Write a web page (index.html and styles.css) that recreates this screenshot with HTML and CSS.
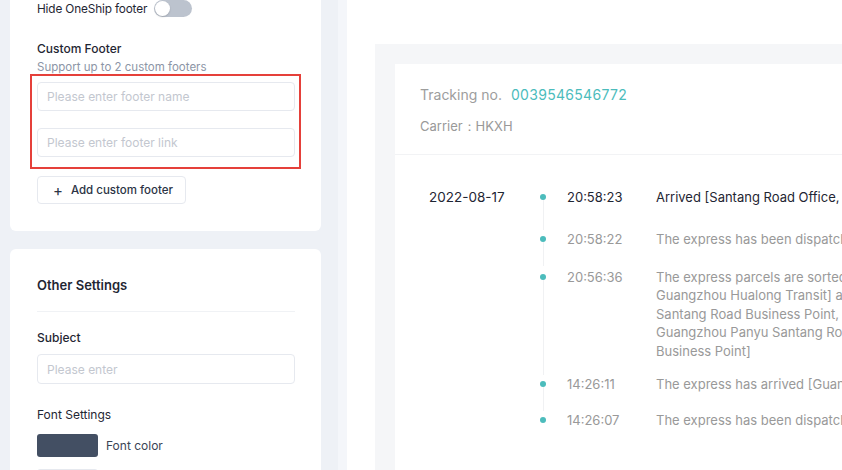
FILE: index.html
```html
<!DOCTYPE html>
<html lang="en">
<head>
    <meta charset="UTF-8">
    <meta name="viewport" content="width=device-width, initial-scale=1.0">
    <title>Tracking Page Settings</title>
    <link rel="stylesheet" href="styles.css">
</head>
<body>

    <div class="page">
        <!-- Settings column -->
        <div class="sidebar">
            <div class="card card-footer">
                <div class="switch-row">
                    <span>Hide OneShip footer</span>
                    <span class="switch"><span class="knob"></span></span>
                </div>

                <div class="field-title">Custom Footer</div>
                <div class="field-hint">Support up to 2 custom footers</div>

                <div class="highlight">
                    <input type="text" class="text-input" placeholder="Please enter footer name">
                    <input type="text" class="text-input" placeholder="Please enter footer link">
                </div>

                <button type="button" class="add-btn"><span class="plus">+</span>Add custom footer</button>
            </div>

            <div class="card card-other">
                <h3>Other Settings</h3>
                <div class="divider"></div>

                <label class="field-label" for="subject">Subject</label>
                <input type="text" class="text-input" id="subject" placeholder="Please enter">

                <div class="field-sub">Font Settings</div>
                <div class="color-row">
                    <span class="swatch swatch-dark"></span>
                    <span>Font color</span>
                </div>
                <div class="color-row">
                    <span class="swatch swatch-light"></span>
                </div>
            </div>
        </div>

        <!-- Preview -->
        <div class="preview-wrap">
            <div class="preview">
                <div class="preview-box">
                    <div class="track-card">
                        <div class="track-head">
                            <div class="track-no">Tracking no.<span class="num">0039546546772</span></div>
                            <div class="carrier">Carrier：HKXH</div>
                        </div>

                        <div class="timeline">
                            <div class="tl-item tl-first">
                                <div class="tl-date">2022-08-17</div>
                                <div class="tl-axis"><span class="dot"></span><span class="line"></span></div>
                                <div class="tl-time">20:58:23</div>
                                <div class="tl-desc">Arrived [Santang Road Office, Panyu District, Guangzhou]</div>
                            </div>
                            <div class="tl-item">
                                <div class="tl-date"></div>
                                <div class="tl-axis"><span class="dot"></span><span class="line"></span></div>
                                <div class="tl-time">20:58:22</div>
                                <div class="tl-desc">The express has been dispatched from [Guangzhou]</div>
                            </div>
                            <div class="tl-item tl-long">
                                <div class="tl-date"></div>
                                <div class="tl-axis"><span class="dot"></span><span class="line"></span></div>
                                <div class="tl-time">20:56:36</div>
                                <div class="tl-desc">The express parcels are sorted in [<br>Guangzhou Hualong Transit] and sent to [<br>Santang Road Business Point, Guangzhou<br>Guangzhou Panyu Santang Road<br>Business Point]</div>
                            </div>
                            <div class="tl-item">
                                <div class="tl-date"></div>
                                <div class="tl-axis"><span class="dot"></span><span class="line"></span></div>
                                <div class="tl-time">14:26:11</div>
                                <div class="tl-desc">The express has arrived [Guangzhou Hualong Transit]</div>
                            </div>
                            <div class="tl-item">
                                <div class="tl-date"></div>
                                <div class="tl-axis"><span class="dot"></span><span class="line"></span></div>
                                <div class="tl-time">14:26:07</div>
                                <div class="tl-desc">The express has been dispatched from [Guangzhou]</div>
                            </div>
                        </div>
                    </div>
                </div>
            </div>
        </div>
    </div>

</body>
</html>
```

FILE: styles.css
```css
body {
    margin: 0;
    font-family: Inter, "Noto Sans", sans-serif;
    background-color: #eef1f6;
    color: #1f2633;
    height: 470px;
    overflow: hidden;
}
.page {
    display: flex;
    height: 470px;
}
.sidebar {
    width: 311px;
    margin-left: 10px;
    flex-shrink: 0;
    display: flex;
    flex-direction: column;
    gap: 18px;
}
.card {
    background: white;
    border-radius: 0 0 6px 6px;
    padding: 0 26px 27px 27px;
}
.card-other {
    border-radius: 6px;
    padding-top: 26px;
    flex: 1;
}
.switch-row {
    display: flex;
    align-items: center;
    gap: 7px;
    height: 17px;
    font-size: 11.8px;
    letter-spacing: -0.15px;
}
.switch {
    width: 38px;
    height: 17px;
    border-radius: 9px;
    background: #bcc3ce;
    display: flex;
    align-items: center;
    padding-left: 1px;
    box-sizing: border-box;
}
.knob {
    width: 15px;
    height: 15px;
    border-radius: 50%;
    background: white;
    box-shadow: 0 1px 2px rgba(0, 0, 0, 0.15);
}
.field-title {
    margin-top: 23px;
    font-size: 12px;
    font-weight: 500;
    line-height: 18px;
}
.field-hint {
    margin-top: 1px;
    font-size: 11.5px;
    line-height: 16px;
    color: #8c95a6;
}
.highlight {
    margin: -1px -6px 0 -7px;
    padding: 6px 4px 10px 5px;
    border: 2px solid #e5403a;
    display: flex;
    flex-direction: column;
    gap: 17px;
}
.text-input {
    display: block;
    width: 100%;
    box-sizing: border-box;
    height: 29px;
    border: 1px solid #e6e9ef;
    border-radius: 4px;
    padding: 0 9px;
    font-family: inherit;
    font-size: 12px;
    color: #1f2633;
    outline: none;
}
.text-input::placeholder {
    color: #c3c7cf;
}
.add-btn {
    margin-top: 7px;
    height: 28px;
    padding: 0 12px 0 15px;
    border: 1px solid #e6e9ef;
    border-radius: 4px;
    background: white;
    font-family: inherit;
    font-size: 11.5px;
    font-weight: 500;
    color: #2b3445;
    display: flex;
    align-items: center;
    cursor: pointer;
}
.plus {
    font-size: 15px;
    font-weight: 400;
    margin-right: 8px;
}
.card-other h3 {
    margin: 0;
    font-size: 13px;
    font-weight: 600;
    line-height: 20px;
}
.divider {
    height: 1px;
    background: #f0f2f5;
    margin: 16px 0 17px;
}
.field-label {
    display: block;
    font-size: 12px;
    font-weight: 500;
    line-height: 18px;
    margin-bottom: 7px;
}
.card-other .text-input {
    height: 30px;
}
.field-sub {
    margin-top: 22px;
    font-size: 12px;
    line-height: 18px;
}
.color-row {
    display: flex;
    align-items: center;
    gap: 8px;
    margin-top: 10px;
    font-size: 12px;
    color: #3b4455;
}
.color-row + .color-row {
    margin-top: 12px;
}
.swatch {
    width: 61px;
    height: 23px;
    border-radius: 3px;
}
.swatch-dark {
    background: #434f63;
}
.swatch-light {
    background: #f4f6f9;
    border: 1px solid #e6e9ef;
    box-sizing: border-box;
}
.preview-wrap {
    margin-left: 17px;
    padding-left: 9px;
    background: #f4f6fa;
    flex: 1;
    min-width: 0;
}
.preview {
    background: white;
    height: 100%;
    padding: 44px 0 0 28px;
    box-sizing: border-box;
    overflow: hidden;
}
.preview-box {
    background: #f5f6f8;
    padding: 20px 0 0 20px;
    width: 700px;
    height: 500px;
}
.track-card {
    background: white;
    height: 100%;
}
.track-head {
    padding: 20px 25px 19px;
    border-bottom: 1px solid #f2f3f5;
}
.track-no {
    font-size: 14px;
    line-height: 22px;
    color: #9d9d9d;
}
.num {
    color: #4cbcbc;
    margin-left: 9px;
    letter-spacing: 0.3px;
}
.carrier {
    margin-top: 11px;
    font-size: 13px;
    line-height: 18px;
    color: #999;
}
.timeline {
    padding: 32px 0 0 34px;
}
.tl-item {
    display: flex;
    font-size: 13px;
    line-height: 18.5px;
    color: #999;
}
.tl-date {
    width: 104px;
    color: #1f2633;
    line-height: 20px;
}
.tl-axis {
    width: 20px;
    display: flex;
    flex-direction: column;
    align-items: center;
    margin-right: 14px;
}
.dot {
    width: 6px;
    height: 6px;
    border-radius: 50%;
    background: #4cbcbc;
    margin-top: 6px;
    flex-shrink: 0;
}
.line {
    flex: 1;
    width: 1px;
    background: #f0f1f3;
}
.tl-item:last-child .line {
    display: none;
}
.tl-time {
    width: 89px;
    padding-bottom: 17px;
}
.tl-desc {
    flex: 1;
    white-space: nowrap;
    padding-bottom: 17px;
}
.tl-first .tl-time,
.tl-first .tl-desc {
    color: #1f2633;
    line-height: 20px;
    padding-bottom: 23px;
}
.tl-first .dot {
    margin-top: 7px;
}
.tl-first .tl-date {
    font-size: 13.5px;
}
.tl-long {
    margin-top: 2px;
}
.tl-long .tl-time,
.tl-long .tl-desc {
    padding-bottom: 15px;
}
```
